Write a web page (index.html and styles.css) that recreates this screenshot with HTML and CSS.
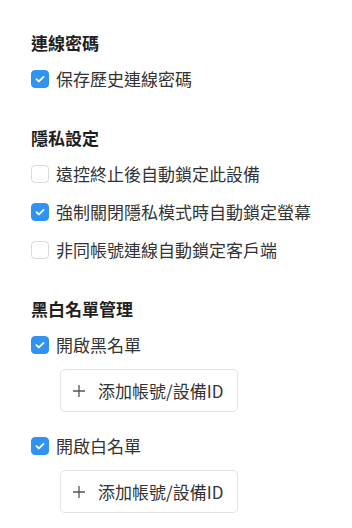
FILE: index.html
```html
<!DOCTYPE html>
<html lang="zh-Hant">
<head>
<meta charset="utf-8">
<link rel="stylesheet" href="styles.css">
</head>
<body>
<div class="page">
  <section class="section">
    <h2 class="heading">連線密碼</h2>
    <label class="row"><span class="box checked"><svg viewBox="0 0 18 18"><path d="M5 9.2 L7.8 11.8 L13 6.6"/></svg></span><span class="label">保存歷史連線密碼</span></label>
  </section>
  <section class="section">
    <h2 class="heading">隱私設定</h2>
    <label class="row"><span class="box"></span><span class="label">遠控終止後自動鎖定此設備</span></label>
    <label class="row"><span class="box checked"><svg viewBox="0 0 18 18"><path d="M5 9.2 L7.8 11.8 L13 6.6"/></svg></span><span class="label">強制關閉隱私模式時自動鎖定螢幕</span></label>
    <label class="row"><span class="box"></span><span class="label">非同帳號連線自動鎖定客戶端</span></label>
  </section>
  <section class="section last">
    <h2 class="heading">黑白名單管理</h2>
    <label class="row"><span class="box checked"><svg viewBox="0 0 18 18"><path d="M5 9.2 L7.8 11.8 L13 6.6"/></svg></span><span class="label">開啟黑名單</span></label>
    <button class="add-btn" type="button"><svg class="plus" viewBox="0 0 12 12"><path d="M6 0 V12 M0 6 H12"/></svg><span>添加帳號/設備ID</span></button>
    <label class="row"><span class="box checked"><svg viewBox="0 0 18 18"><path d="M5 9.2 L7.8 11.8 L13 6.6"/></svg></span><span class="label">開啟白名單</span></label>
    <button class="add-btn final" type="button"><svg class="plus" viewBox="0 0 12 12"><path d="M6 0 V12 M0 6 H12"/></svg><span>添加帳號/設備ID</span></button>
  </section>
</div>
</body>
</html>
```

FILE: styles.css
```css
html, body {
  margin: 0;
  padding: 0;
  background: #ffffff;
}
body {
  font-family: "Noto Sans CJK TC", "Noto Sans", sans-serif;
  color: #333333;
}
.page {
  padding: 31px 0 0 31px;
}
.section {
  display: flex;
  flex-direction: column;
  align-items: flex-start;
  margin-bottom: 28px;
}
.section.last {
  margin-bottom: 0;
}
.heading {
  margin: 0 0 5px 0;
  height: 24px;
  line-height: 24px;
  font-size: 17px;
  font-weight: 700;
  color: #1f1f1f;
}
.row {
  display: flex;
  align-items: center;
  height: 38px;
  gap: 7px;
  font-size: 17px;
  line-height: 24px;
}
.box {
  width: 18px;
  height: 18px;
  box-sizing: border-box;
  border: 1px solid #d9d9d9;
  border-radius: 4px;
  background: #fff;
  display: flex;
  flex: none;
}
.box.checked {
  background: #3093f2;
  border-color: #3093f2;
}
.box svg {
  width: 16px;
  height: 16px;
  fill: none;
  stroke: #fff;
  stroke-width: 2;
  stroke-linecap: round;
  stroke-linejoin: round;
}
.add-btn {
  margin: 5px 0 15px 29px;
  width: 178px;
  height: 43px;
  box-sizing: border-box;
  border: 1px solid #e3e3e3;
  border-radius: 5px;
  background: #fff;
  display: flex;
  align-items: center;
  padding: 0 0 0 12px;
  gap: 13px;
  font-family: "Noto Sans CJK TC", "Noto Sans", sans-serif;
  font-size: 17px;
  color: #333333;
}
.add-btn.final {
  margin-bottom: 0;
}
.plus {
  width: 12px;
  height: 12px;
  flex: none;
  stroke: #555;
  stroke-width: 1.3;
  fill: none;
}
```
